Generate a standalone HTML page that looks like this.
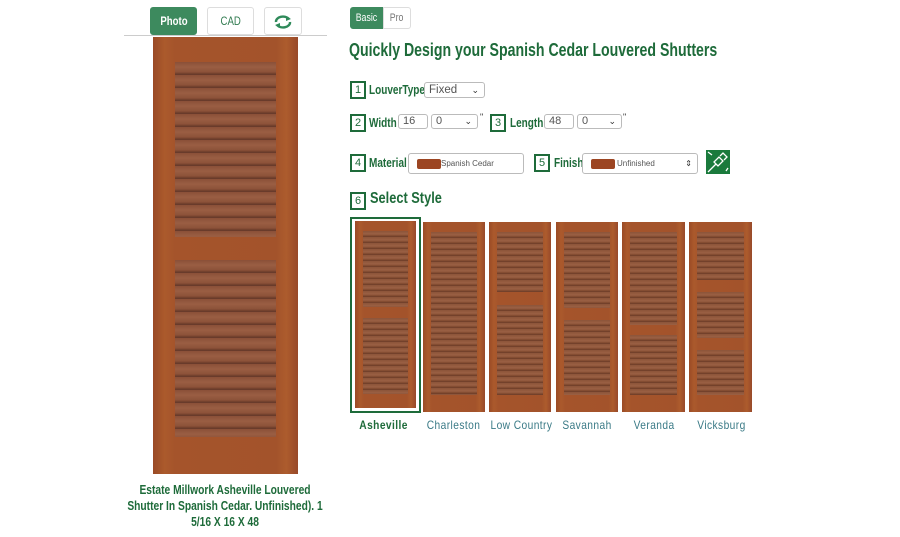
<!DOCTYPE html>
<html><head><meta charset="utf-8"><style>
body{margin:0;width:900px;height:537px;background:#fff;position:relative;overflow:hidden;font-family:"Liberation Sans",sans-serif;color:#1e6b3a}
.a{position:absolute}
.n{display:inline-block;transform:scaleX(.8);transform-origin:left center;white-space:nowrap}
.btn{position:absolute;border:1px solid #ddd;border-radius:3px;box-sizing:border-box;text-align:center;font-size:12px;color:#2f7a4f}
.wood{position:absolute;background:linear-gradient(90deg,#9a4a26 0%,#ab5a2c 8%,#a5542b 15%,#a3532b 85%,#ad5c2d 92%,#98492a 100%)}
.lv{position:absolute;background:repeating-linear-gradient(180deg,#8a5038 0,#9a5e43 5px,#8c5239 10px,#74412d 11.5px,#63382a 13px)}
.lt{position:absolute;background:repeating-linear-gradient(180deg,#8b5439 0,#9a6044 3px,#80492f 4.8px,#6a3b28 6px)}
.num{position:absolute;width:16px;height:18px;border:2px solid #1e6b3a;box-sizing:border-box;font-size:11px;text-align:center;line-height:14px;color:#1e6b3a}
.lbl{position:absolute;font-weight:bold;font-size:12.5px;color:#1e6b3a}
.sel{position:absolute;border:1px solid #bbb;border-radius:3px;box-sizing:border-box;font-size:11px;color:#555;padding-left:4px;background:#fff}
.sel .c{position:absolute;right:5px;top:0;font-size:9px;color:#333}
.cap{position:absolute;font-size:12px;color:#3a7a86;text-align:center;width:70px;white-space:nowrap}
.cap span{display:inline-block;transform:scaleX(.85);letter-spacing:.5px}
</style></head><body>
<div class="btn" style="left:150px;top:7px;width:47px;height:28px;background:#3d8a5e;border-color:#3d8a5e;color:#fff;line-height:27px;font-weight:bold"><span class="n" style="transform-origin:center">Photo</span></div>
<div class="btn" style="left:207px;top:7px;width:47px;height:28px;line-height:27px"><span class="n" style="transform-origin:center">CAD</span></div>
<div class="btn" style="left:264px;top:7px;width:38px;height:28px">
<svg width="22" height="16" viewBox="0 0 22 16" style="margin-top:6px"><path d="M4 8a7 5 0 0 1 13-3" fill="none" stroke="#2f8a5a" stroke-width="2.4"/><path d="M14 2l5 3-5 2z" fill="#2f8a5a"/><path d="M18 8a7 5 0 0 1-13 3" fill="none" stroke="#2f8a5a" stroke-width="2.4"/><path d="M8 14l-5-3 5-2z" fill="#2f8a5a"/></svg></div>
<div class="a" style="left:124px;top:35px;width:203px;height:1px;background:#ccc"></div>

<div class="wood" style="left:153px;top:37px;width:145px;height:437px"></div>
<div class="lv" style="left:175px;top:62px;width:101px;height:175px"></div>
<div class="lv" style="left:175px;top:260px;width:101px;height:177px"></div>

<div class="a" style="left:75px;top:482px;width:300px;text-align:center;font-size:12.5px;font-weight:bold;line-height:16px;color:#1e6b3a;transform:scaleX(.82)">Estate Millwork Asheville Louvered<br>Shutter In Spanish Cedar. Unfinished). 1<br>5/16 X 16 X 48</div>

<div class="btn" style="left:350px;top:7px;width:33px;height:22px;background:#3d8a5e;border-color:#3d8a5e;color:#fff;line-height:21px;font-size:11px;border-radius:3px 0 0 3px"><span class="n" style="transform-origin:center">Basic</span></div>
<div class="btn" style="left:383px;top:7px;width:28px;height:22px;line-height:21px;font-size:11px;color:#777;border-radius:0 3px 3px 0"><span class="n" style="transform-origin:center">Pro</span></div>
<div class="a" style="left:349px;top:40px;font-size:18px;font-weight:bold;color:#1e6b3a"><span class="n" style="transform:scaleX(.785)">Quickly Design your Spanish Cedar Louvered Shutters</span></div>

<div class="num" style="left:350px;top:81px">1</div><div class="lbl" style="left:369px;top:83px"><span class="n">LouverType</span></div>
<div class="sel" style="left:424px;top:82px;width:61px;height:16px;line-height:14px;font-size:11.5px">Fixed<span class="c">&#8964;</span></div>

<div class="num" style="left:350px;top:114px">2</div><div class="lbl" style="left:369px;top:116px"><span class="n">Width</span></div>
<div class="sel" style="left:398px;top:114px;width:30px;height:15px;line-height:13px">16</div>
<div class="sel" style="left:431px;top:114px;width:47px;height:15px;line-height:13px">0<span class="c">&#8964;</span></div>
<div class="a" style="left:480px;top:112px;font-size:9px;color:#333">"</div>
<div class="num" style="left:490px;top:114px">3</div><div class="lbl" style="left:510px;top:116px"><span class="n">Length</span></div>
<div class="sel" style="left:544px;top:114px;width:30px;height:15px;line-height:13px">48</div>
<div class="sel" style="left:577px;top:114px;width:45px;height:15px;line-height:13px">0<span class="c">&#8964;</span></div>
<div class="a" style="left:623px;top:112px;font-size:9px;color:#333">"</div>

<div class="num" style="left:350px;top:154px">4</div><div class="lbl" style="left:369px;top:156px"><span class="n">Material</span></div>
<div class="sel" style="left:408px;top:153px;width:116px;height:21px;font-size:8px;line-height:19px;padding-left:32px">Spanish Cedar<span class="a" style="left:8px;top:5px;width:24px;height:10px;background:#9c4522;border-radius:2px"></span></div>
<div class="num" style="left:534px;top:154px">5</div><div class="lbl" style="left:554px;top:156px"><span class="n">Finish</span></div>
<div class="sel" style="left:582px;top:153px;width:116px;height:21px;font-size:8px;line-height:19px;padding-left:34px">Unfinished<span class="a" style="left:8px;top:5px;width:24px;height:10px;background:#9c4522;border-radius:2px"></span><span class="c" style="font-size:8px">&#8661;</span></div>
<svg class="a" style="left:706px;top:150px" width="24" height="24" viewBox="0 0 24 24"><rect width="24" height="24" fill="#1a7a3c"/><path d="M2 22L10 14M8 12l5-5 4 4-5 5zM14 6l3-3 4 4-3 3M2 2l4 3M20 21l2-3" stroke="#fff" stroke-width="1.3" fill="none"/></svg>

<div class="num" style="left:350px;top:192px">6</div>
<div class="a" style="left:370px;top:190px;font-size:16px;font-weight:bold;color:#1e6b3a"><span class="n">Select Style</span></div>

<div class="a" style="left:350px;top:217px;width:71px;height:196px;border:2px solid #1e6b3a;box-sizing:border-box"></div>
<div class="wood" style="left:355px;top:221px;width:61px;height:187px"></div>
<div class="lt" style="left:363px;top:231px;width:45px;height:76px"></div>
<div class="lt" style="left:363px;top:318px;width:45px;height:76px"></div>

<div class="wood" style="left:423px;top:222px;width:62px;height:190px"></div>
<div class="lt" style="left:431px;top:232px;width:46px;height:163px"></div>

<div class="wood" style="left:489px;top:222px;width:62px;height:190px"></div>
<div class="lt" style="left:497px;top:232px;width:46px;height:60px"></div>
<div class="lt" style="left:497px;top:305px;width:46px;height:90px"></div>

<div class="wood" style="left:556px;top:222px;width:62px;height:190px"></div>
<div class="lt" style="left:564px;top:232px;width:46px;height:76px"></div>
<div class="lt" style="left:564px;top:320px;width:46px;height:75px"></div>

<div class="wood" style="left:622px;top:222px;width:63px;height:190px"></div>
<div class="lt" style="left:630px;top:232px;width:47px;height:93px"></div>
<div class="lt" style="left:630px;top:335px;width:47px;height:60px"></div>

<div class="wood" style="left:689px;top:222px;width:63px;height:190px"></div>
<div class="lt" style="left:697px;top:232px;width:47px;height:48px"></div>
<div class="lt" style="left:697px;top:292px;width:47px;height:46px"></div>
<div class="lt" style="left:697px;top:350px;width:47px;height:45px"></div>

<div class="cap" style="left:349px;top:418px;font-weight:bold;color:#1e6b3a"><span>Asheville</span></div>
<div class="cap" style="left:419px;top:418px"><span>Charleston</span></div>
<div class="cap" style="left:485px;top:418px"><span>Low Country</span></div>
<div class="cap" style="left:552px;top:418px"><span>Savannah</span></div>
<div class="cap" style="left:619px;top:418px"><span>Veranda</span></div>
<div class="cap" style="left:686px;top:418px"><span>Vicksburg</span></div>
</body></html>
